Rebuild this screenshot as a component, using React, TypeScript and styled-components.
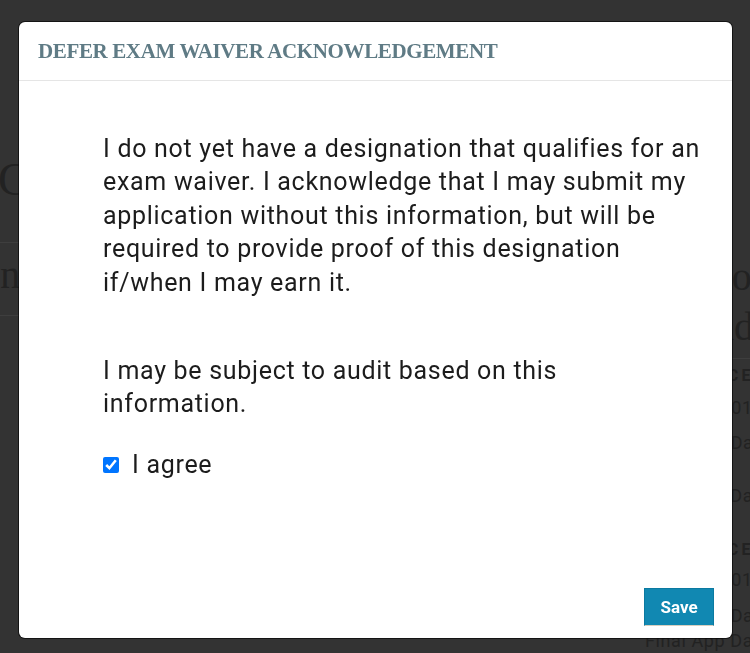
import React, { useState } from 'react'
import styled, { createGlobalStyle } from 'styled-components'

const GlobalStyle = createGlobalStyle`
  html, body {
    margin: 0;
    padding: 0;
    background: #333333;
    overflow: hidden;
  }
  * {
    box-sizing: border-box;
  }
`

const textColor = '#1c1c1c'
const ghostText = '#222222'
const ghostLine = '#3e3e3e'
const primary = '#1188b2'

export default function App() {
  const [agreed, setAgreed] = useState(true)

  return (
    <>
      <GlobalStyle />
      <Page>
        <MainColumn>
          <PageTitle>Certification</PageTitle>
          <PageRule />
          <SubTitle>Instructions</SubTitle>
          <PageRule $top={18} />
        </MainColumn>
        <SideColumn>
          <SideTitle>
            Info
            <br />
            Add
          </SideTitle>
          <SideRule />
          <Record>
            <RecordTitle>ACTIVE CE</RecordTitle>
            <RecordLine $gap={2}>Applicant 01</RecordLine>
            <RecordLine $gap={5}>Start App Date</RecordLine>
            <RecordLine $gap={23}>Final App Date</RecordLine>
          </Record>
          <Record>
            <RecordTitle>ACTIVE CE</RecordTitle>
            <RecordLine $gap={0}>Applicant 01</RecordLine>
            <RecordLine $gap={6}>Start App Date</RecordLine>
            <RecordLine $gap={-5}>Final App Date</RecordLine>
          </Record>
        </SideColumn>
      </Page>

      <Backdrop>
        <Modal>
          <Header>
            <Title>DEFER EXAM WAIVER ACKNOWLEDGEMENT</Title>
          </Header>
          <Body>
            <Paragraph>
              I do not yet have a designation that qualifies for an exam waiver. I acknowledge
              that I may submit my application without this information, but will be required
              to provide proof of this designation if/when I may earn it.
            </Paragraph>
            <Paragraph>I may be subject to audit based on this information.</Paragraph>
            <CheckRow>
              <Checkbox
                type="checkbox"
                checked={agreed}
                onChange={(e) => setAgreed(e.target.checked)}
              />
              <span>I agree</span>
            </CheckRow>
          </Body>
          <Footer>
            <SaveButton type="button">Save</SaveButton>
          </Footer>
        </Modal>
      </Backdrop>
    </>
  )
}

/* page behind the overlay */

const Page = styled.div`
  display: flex;
  width: 100vw;
  height: 100vh;
  padding-top: 150px;
  font-family: 'Liberation Serif', serif;
  color: ${ghostText};
  white-space: nowrap;
`

const MainColumn = styled.div`
  width: 625px;
  flex-shrink: 0;
`

const PageTitle = styled.h1`
  margin: 0 0 0 -2px;
  font-size: 46px;
  font-weight: 400;
  line-height: 60px;
`

const PageRule = styled.div<{ $top?: number }>`
  height: 1px;
  background: ${ghostLine};
  margin-top: ${(p) => p.$top ?? 32}px;
`

const SubTitle = styled.h2`
  margin: 10px 0 0;
  font-size: 40px;
  font-weight: 400;
  line-height: 44px;
  text-indent: -13px;
`

const SideColumn = styled.div`
  padding-left: 20px;
  margin-top: 102px;
  flex: 1;
`

const SideTitle = styled.h2`
  margin: 0 0 0 40px;
  font-size: 40px;
  font-weight: 400;
  line-height: 50px;
`

const SideRule = styled.div`
  height: 1px;
  background: ${ghostLine};
  margin-top: 6px;
`

const Record = styled.div`
  padding-top: 2px;
  font-family: 'Roboto', sans-serif;
  font-size: 18px;
  letter-spacing: 0.6px;
  & + & {
    padding-top: 24px;
  }
`

const RecordTitle = styled.div`
  font-size: 16px;
  font-weight: 700;
  letter-spacing: 3.4px;
  line-height: 30px;
`

const RecordLine = styled.div<{ $gap: number }>`
  line-height: 30px;
  margin-top: ${(p) => p.$gap}px;
`

/* modal */

const Backdrop = styled.div`
  position: fixed;
  inset: 0;
  display: flex;
  justify-content: center;
  align-items: flex-start;
  padding-top: 22px;
`

const Modal = styled.div`
  width: 713px;
  height: 616px;
  background: #ffffff;
  border-radius: 6px;
  box-shadow: 0 0 0 1px rgba(0, 0, 0, 0.6);
  display: flex;
  flex-direction: column;
  margin-left: 1px;
`

const Header = styled.div`
  height: 59px;
  padding: 0 19px;
  display: flex;
  align-items: center;
  border-bottom: 1px solid #e5e5e5;
`

const Title = styled.h4`
  margin: 0;
  font-family: 'Liberation Serif', serif;
  font-weight: 700;
  font-size: 21px;
  color: #5f7b85;
  letter-spacing: -0.37px;
`

const Body = styled.div`
  flex: 1;
  padding: 51px 31px 0 84px;
  font-family: 'Roboto', sans-serif;
  font-size: 25px;
  letter-spacing: 0.7px;
  line-height: 33.4px;
  color: ${textColor};
`

const Paragraph = styled.p`
  margin: 0 0 55px;
  &:nth-of-type(2) {
    margin-bottom: 27px;
  }
`

const CheckRow = styled.label`
  display: flex;
  align-items: center;
  gap: 13px;
`

const Checkbox = styled.input`
  width: 16px;
  height: 16px;
  margin: 0;
  accent-color: #0075ff;
`

const Footer = styled.div`
  display: flex;
  justify-content: flex-end;
  padding: 0 18px 12px;
`

const SaveButton = styled.button`
  width: 70px;
  height: 38px;
  background: ${primary};
  border: 1px solid #0b7aa1;
  border-bottom-color: #d9cfbf;
  color: #ffffff;
  font-family: 'Roboto', sans-serif;
  font-weight: 700;
  font-size: 17px;
  cursor: pointer;
`
